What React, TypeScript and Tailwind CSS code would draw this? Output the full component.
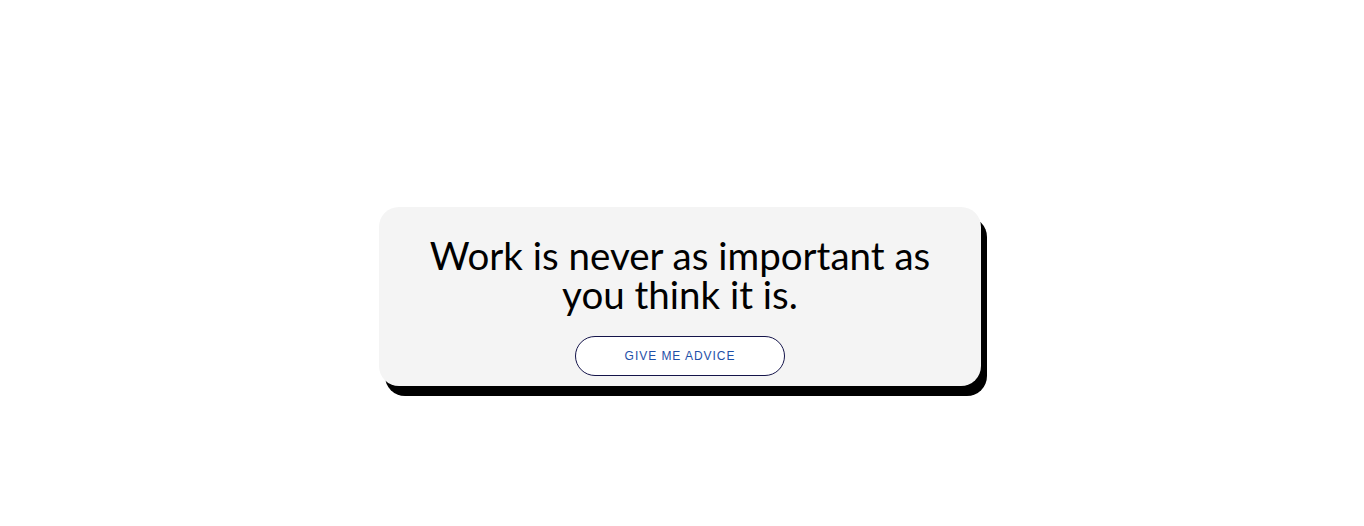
import React from 'react';

export default function App() {
  return (
    <div className="min-h-[526px] w-full bg-white pt-[207px]">
      <div className="mx-auto w-[602px] translate-x-[-2px]">
        <div className="flex flex-col items-center rounded-[20px] bg-[#f4f4f4] px-8 pt-[29px] pb-[10px] shadow-[6px_10px_0_0_#000]">
          <h1 className="text-center font-['Lato',sans-serif] text-[38.5px] leading-[39px] font-normal text-black">
            <span className="block">Work is never as important as</span>
            <span className="block">you think it is.</span>
          </h1>
          <button className="mt-[22px] h-[40px] w-[210px] rounded-full border border-[#14144a] bg-white font-['Liberation_Sans',Arial,sans-serif] text-[12px] tracking-[0.08em] text-[#1e50a8] uppercase">
            Give me advice
          </button>
        </div>
      </div>
    </div>
  );
}
